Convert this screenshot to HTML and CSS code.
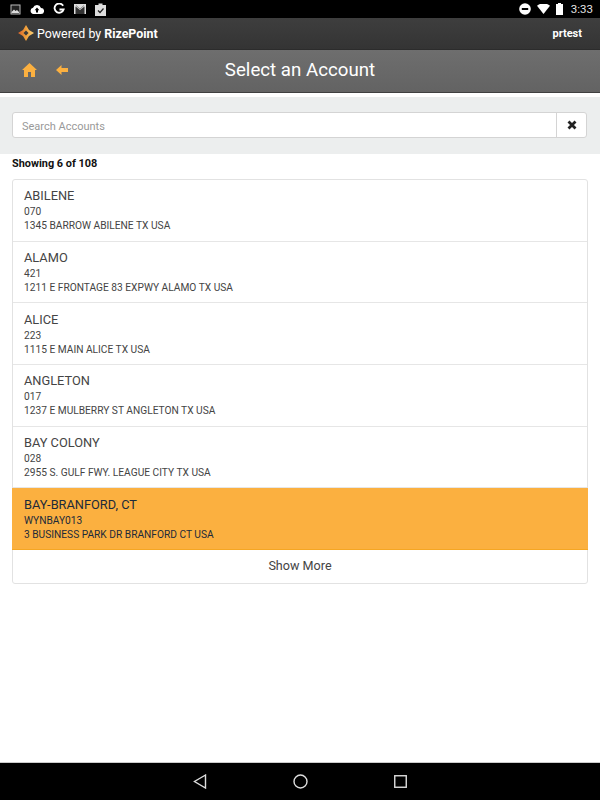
FILE: index.html
```html
<!DOCTYPE html>
<html lang="en">

<head>
  <meta charset="UTF-8" />
  <title>Select an Account</title>
  <link rel="stylesheet" href="styles.css">
</head>

<body>
  <div class="screen">

    <div class="status_bar">
      <div class="status_left">
        <svg width="11" height="11" viewBox="0 0 11 11"><rect x="0.5" y="0.5" width="10" height="10" fill="#bbb"/><rect x="1.5" y="1.5" width="8" height="8" fill="#222"/><path d="M1.5 8l2.5-2.5 1.5 1.5 1.5-1 2 2v1h-7.500z" fill="#ddd"/></svg>
        <svg width="14" height="10" viewBox="0 0 14 10"><path d="M3.500 10A3.200 3.200 0 0 1 3 3.700 4.300 4.300 0 0 1 11 3.900 3 3 0 0 1 11 10z" fill="#fff"/><path d="M7 3.500L4.700 6.200H6V8.500H8V6.200H9.300z" fill="#000"/></svg>
        <svg width="12" height="12" viewBox="0 0 13 13"><path d="M11 3A5 5 0 1 0 11.500 7H7" fill="none" stroke="#fff" stroke-width="2"/></svg>
        <svg width="12" height="10" viewBox="0 0 12 10"><rect width="12" height="10" fill="#ddd"/><path d="M1.500 10V2.500L6 6l4.500-3.500V10" fill="#333"/><path d="M2 1.500L6 5l4-3.500" fill="none" stroke="#333" stroke-width="0.500"/></svg>
        <svg width="11" height="13" viewBox="0 0 11 13"><path d="M0 2H3.500V0.500H7.500V2H11V13H0z" fill="#ddd"/><path d="M3 7.500L5 9.500 8.500 5.500" fill="none" stroke="#222" stroke-width="1.200"/></svg>
      </div>
      <div class="status_right">
        <svg width="12" height="12" viewBox="0 0 12 12"><circle cx="6" cy="6" r="5.800" fill="#fff"/><rect x="2.800" y="5" width="6.400" height="2" fill="#000"/></svg>
        <svg width="13" height="10" viewBox="0 0 13 10"><path d="M0 1.800A10 10 0 0 1 13 1.800L6.500 10z" fill="#fff"/></svg>
        <svg width="7" height="12" viewBox="0 0 7 12"><path d="M2 0H5V1H7V12H0V1H2z" fill="#fff"/></svg>
        <span class="clock">3:33</span>
      </div>
    </div>

    <div class="brand_bar">
      <div class="brand">
        <svg class="brand_logo" width="16" height="16" viewBox="0 0 16 16">
          <defs>
            <linearGradient id="logo_fill" x1="0" y1="0" x2="1" y2="0">
              <stop offset="0" stop-color="#d8622a"/>
              <stop offset="0.5" stop-color="#f0a03a"/>
              <stop offset="1" stop-color="#fbd27a"/>
            </linearGradient>
          </defs>
          <path d="M8 0L11 5 16 8 11 11 8 16 5 11 0 8 5 5z" fill="url(#logo_fill)"/>
          <path d="M8 5.500L10.500 8 8 10.500 5.500 8z" fill="#3a3a3a"/>
        </svg>
        <span>Powered by <strong>RizePoint</strong></span>
      </div>
      <strong class="username">prtest</strong>
    </div>

    <header class="title_bar">
      <div class="title_icons">
        <svg width="15" height="14" viewBox="0 0 15 14"><path d="M7.500 0L15 7H13V14H9V9H6V14H2V7H0z" fill="#fbb040"/></svg>
        <svg width="12" height="10" viewBox="0 0 12 10"><path d="M0 5L5.500 0V3H12V7H5.500V10z" fill="#fbb040"/></svg>
      </div>
      <h1>Select an Account</h1>
    </header>

    <div class="search_band">
      <div class="search_group">
        <input class="search_input" type="text" placeholder="Search Accounts" />
        <button class="search_clear" type="button">
          <svg width="10" height="10" viewBox="0 0 10 10"><path d="M1.500 1.500L8.500 8.500M8.500 1.500L1.500 8.500" stroke="#222" stroke-width="2.800"/></svg>
        </button>
      </div>
    </div>

    <main class="content">
      <p class="showing">Showing 6 of 108</p>

      <ul class="account_list">
        <li class="account_item">
          <div class="account_name">ABILENE</div>
          <div class="account_line">070</div>
          <div class="account_line">1345 BARROW ABILENE TX USA</div>
        </li>
        <li class="account_item">
          <div class="account_name">ALAMO</div>
          <div class="account_line">421</div>
          <div class="account_line">1211 E FRONTAGE 83 EXPWY ALAMO TX USA</div>
        </li>
        <li class="account_item">
          <div class="account_name">ALICE</div>
          <div class="account_line">223</div>
          <div class="account_line">1115 E MAIN ALICE TX USA</div>
        </li>
        <li class="account_item">
          <div class="account_name">ANGLETON</div>
          <div class="account_line">017</div>
          <div class="account_line">1237 E MULBERRY ST ANGLETON TX USA</div>
        </li>
        <li class="account_item">
          <div class="account_name">BAY COLONY</div>
          <div class="account_line">028</div>
          <div class="account_line">2955 S. GULF FWY. LEAGUE CITY TX USA</div>
        </li>
        <li class="account_item selected">
          <div class="account_name">BAY-BRANFORD, CT</div>
          <div class="account_line">WYNBAY013</div>
          <div class="account_line">3 BUSINESS PARK DR BRANFORD CT USA</div>
        </li>
        <li class="show_more">Show More</li>
      </ul>
    </main>

    <nav class="nav_bar">
      <svg width="14" height="15" viewBox="0 0 14 15"><path d="M12.500 1L1.500 7.500 12.500 14z" fill="none" stroke="#ddd" stroke-width="1.400"/></svg>
      <svg width="15" height="15" viewBox="0 0 15 15"><circle cx="7.500" cy="7.500" r="6.500" fill="none" stroke="#ddd" stroke-width="1.400"/></svg>
      <svg width="13" height="13" viewBox="0 0 13 13"><rect x="0.750" y="0.750" width="11.500" height="11.500" fill="none" stroke="#ddd" stroke-width="1.400"/></svg>
    </nav>

  </div>
</body>

</html>
```

FILE: styles.css
```css
* {
  box-sizing: border-box;
}

body {
  margin: 0;
  font-family: Roboto, "Liberation Sans", sans-serif;
  background-color: #fff;
  color: #222;
}

.screen {
  display: flex;
  flex-direction: column;
  width: 600px;
  height: 800px;
  overflow: hidden;
}

.status_bar {
  display: flex;
  flex: none;
  align-items: center;
  justify-content: space-between;
  height: 18px;
  padding: 0 7px 0 10px;
  background: #000;
}

.status_left,
.status_right {
  display: flex;
  align-items: center;
}

.status_left {
  gap: 9px;
}

.status_right {
  gap: 6px;
}

.clock {
  margin-left: 2px;
  color: #e4e4e4;
  font-size: 11.500px;
}

.brand_bar {
  display: flex;
  flex: none;
  align-items: center;
  justify-content: space-between;
  height: 32px;
  padding: 0 18px 1px 18px;
  background: linear-gradient(#3e3e3e, #343434);
  border-bottom: 1px solid #2c2c2c;
  color: #fff;
  font-size: 12.400px;
}

.brand {
  display: flex;
  align-items: center;
  gap: 3px;
}

.username {
  font-size: 11px;
}

.title_bar {
  position: relative;
  display: flex;
  flex: none;
  align-items: center;
  justify-content: center;
  height: 43px;
  padding-bottom: 2px;
  background: linear-gradient(#6e6e6e, #636363);
  border-bottom: 1px solid #3f3f3f;
}

.title_icons {
  position: absolute;
  top: 13px;
  left: 22px;
  display: flex;
  align-items: center;
  gap: 19px;
}

.title_bar h1 {
  margin: 0;
  color: #fff;
  font-size: 18.700px;
  font-weight: 400;
}

.search_band {
  flex: none;
  margin-top: 4px;
  padding: 15px 13px 16px 12px;
  background: #eceeee;
}

.search_group {
  display: flex;
  height: 26px;
  background: #fff;
  border: 1px solid #d4d4d4;
  border-radius: 3px;
}

.search_input {
  flex: 1;
  min-width: 0;
  padding: 2px 9px 0;
  border: 0;
  outline: 0;
  background: transparent;
  font-family: inherit;
  font-size: 11px;
}

.search_input::placeholder {
  color: #999;
}

.search_clear {
  display: flex;
  align-items: center;
  justify-content: center;
  width: 30px;
  padding: 0;
  border: 0;
  border-left: 1px solid #d4d4d4;
  background: transparent;
}

.content {
  flex: 1;
  padding: 0 12px;
}

.showing {
  margin: 3px 0 9px;
  color: #111;
  font-size: 10.900px;
  font-weight: 700;
  line-height: 13px;
}

.account_list {
  margin: 0;
  padding: 0;
  list-style: none;
  background: #fff;
  border: 1px solid #e2e2e2;
  border-radius: 3px;
}

.account_item {
  height: 61.700px;
  padding: 8.300px 11px 0 11px;
  border-bottom: 1px solid #e6e6e6;
  color: #444;
}

.account_name {
  font-size: 12.800px;
  line-height: 15px;
  margin-bottom: 2px;
}

.account_line {
  font-size: 10.200px;
  line-height: 14px;
}

.selected {
  margin: 0 -1px;
  padding-left: 12px;
  background: #fbb040;
  border-bottom-color: #f5a623;
  color: #1c2a3a;
}

.show_more {
  height: 33px;
  color: #444;
  font-size: 12.600px;
  line-height: 32px;
  text-align: center;
}

.nav_bar {
  display: flex;
  flex: none;
  align-items: center;
  justify-content: center;
  gap: 86px;
  height: 38px;
  padding-bottom: 1px;
  background: #000;
  border-top: 1px solid #ccc;
}
```
